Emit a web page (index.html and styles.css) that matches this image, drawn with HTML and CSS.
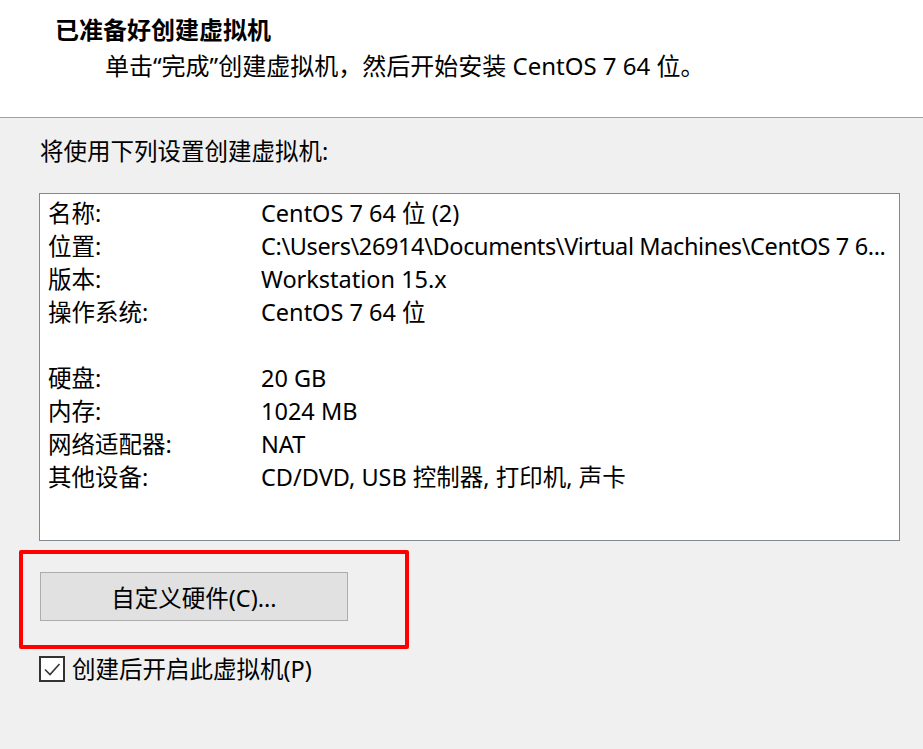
FILE: index.html
```html
<!DOCTYPE html>
<html lang="zh-CN">
<head>
<meta charset="utf-8">
<title>新建虚拟机向导</title>
<link rel="stylesheet" href="styles.css">
</head>
<body>
<div class="header">
  <div class="title">已准备好创建虚拟机</div>
  <div class="subtitle">单击“完成”创建虚拟机，然后开始安装 CentOS 7 64 位。</div>
</div>
<div class="content">
  <div class="section-label">将使用下列设置创建虚拟机:</div>
  <div class="listbox">
    <div class="row"><span class="key">名称:</span><span class="val">CentOS 7 64 位 (2)</span></div>
    <div class="row"><span class="key">位置:</span><span class="val val-path">C:\Users\26914\Documents\Virtual Machines\CentOS 7 6...</span></div>
    <div class="row"><span class="key">版本:</span><span class="val">Workstation 15.x</span></div>
    <div class="row"><span class="key">操作系统:</span><span class="val">CentOS 7 64 位</span></div>
    <div class="row"></div>
    <div class="row"><span class="key">硬盘:</span><span class="val">20 GB</span></div>
    <div class="row"><span class="key">内存:</span><span class="val">1024 MB</span></div>
    <div class="row"><span class="key">网络适配器:</span><span class="val">NAT</span></div>
    <div class="row"><span class="key">其他设备:</span><span class="val">CD/DVD, USB 控制器, 打印机, 声卡</span></div>
  </div>
  <div class="highlight">
    <button class="btn" type="button">自定义硬件(C)...</button>
  </div>
  <label class="check">
    <span class="box"><svg width="20" height="20" viewBox="0 0 20 20"><path d="M3 10.5 L8 15.5 L17.5 5" fill="none" stroke="#333" stroke-width="1.6"/></svg></span>
    <span class="check-text">创建后开启此虚拟机(P)</span>
  </label>
</div>
</body>
</html>
```
FILE: styles.css
```css
html, body {
  margin: 0;
  padding: 0;
}
body {
  width: 923px;
  height: 749px;
  background: #f0f0f0;
  font-family: "Noto Sans", "Noto Sans CJK SC", sans-serif;
  font-size: 23.5px;
  color: #000;
  overflow: hidden;
}
.header {
  background: #fff;
  border-bottom: 1px solid #a0a0a0;
  padding-top: 15px;
  box-sizing: border-box;
  height: 118px;
}
.title {
  padding-left: 55px;
  font-weight: bold;
  font-size: 24px;
  line-height: 30px;
}
.subtitle {
  padding-left: 105px;
  margin-top: 6px;
  line-height: 30px;
  font-size: 24px;
}
.content {
  padding-top: 18px;
}
.section-label {
  padding-left: 40px;
  line-height: 30px;
}
.listbox {
  margin-top: 27px;
  margin-left: 39px;
  width: 861px;
  height: 348px;
  box-sizing: border-box;
  background: #fff;
  border: 1px solid #828790;
  padding: 3px 0 0 8px;
}
.row {
  display: flex;
  height: 33px;
  line-height: 33px;
  white-space: nowrap;
}
.key {
  width: 213px;
  flex: none;
}
.val {
  flex: none;
}
.val-path {
  letter-spacing: -0.38px;
}
.highlight {
  margin-top: 9px;
  margin-left: 19px;
  width: 390px;
  height: 99px;
  box-sizing: border-box;
  border: 4px solid #ff0000;
  border-radius: 2px;
  padding: 18px 0 0 17px;
}
.btn {
  display: block;
  width: 308px;
  height: 49px;
  box-sizing: border-box;
  background: #e1e1e1;
  border: 1px solid #adadad;
  font-family: inherit;
  font-size: 23.5px;
  color: #000;
  padding: 0;
  margin: 0;
}
.check {
  display: flex;
  align-items: center;
  margin-top: 7px;
  margin-left: 39px;
  gap: 7px;
}
.box {
  width: 26px;
  height: 26px;
  box-sizing: border-box;
  border: 2px solid #333;
  background: #fff;
  display: flex;
  align-items: center;
  justify-content: center;
}
.box svg {
  display: block;
}
.check-text {
  line-height: 26px;
}
```
